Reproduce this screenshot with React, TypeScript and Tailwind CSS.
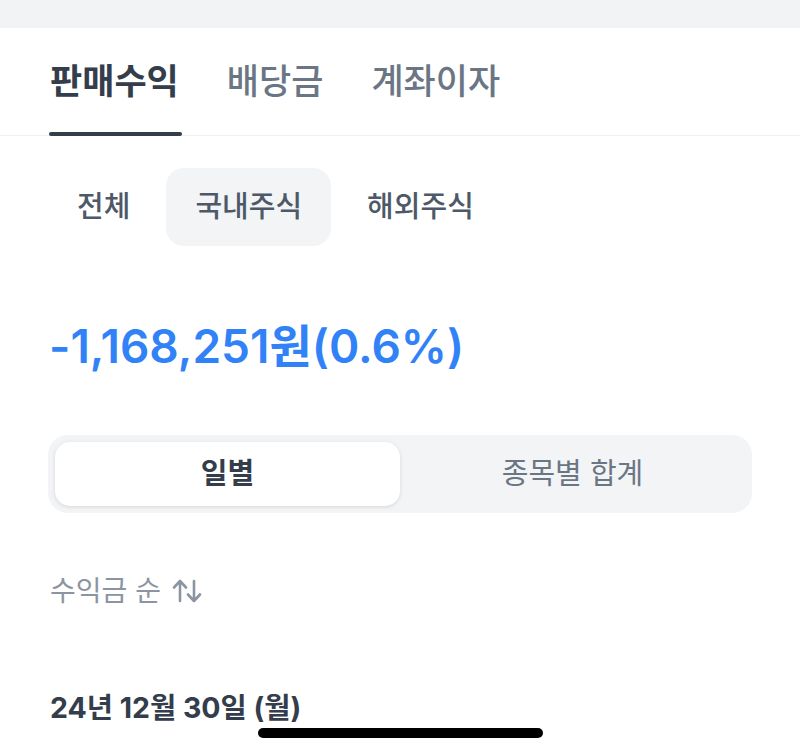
import { useState } from 'react'

const mainTabs = ['판매수익', '배당금', '계좌이자']
const marketTabs = ['전체', '국내주식', '해외주식']

function SortIcon() {
  return (
    <svg width="32" height="26" viewBox="0 0 32 26" fill="none" stroke="#8b95a1" strokeWidth="2.6" strokeLinecap="round" strokeLinejoin="round">
      <path d="M9 23V3M3 9.5l6-6.5 6 6.5" />
      <path d="M23 3v20M17 16.5l6 6.5 6-6.5" />
    </svg>
  )
}

export default function App() {
  const [tab, setTab] = useState(0)
  const [market, setMarket] = useState(1)
  const [mode, setMode] = useState(0)

  return (
    <div
      className="relative min-h-screen w-[800px] h-[754px] overflow-hidden bg-white"
      style={{ fontFamily: 'Inter, "Noto Sans CJK KR", sans-serif' }}
    >
      <div className="h-[28px] bg-[#f2f3f5]" />

      <div className="flex gap-[48px] px-[50px] border-b border-[#eef0f2]">
        {mainTabs.map((t, i) => (
          <button
            key={t}
            onClick={() => setTab(i)}
            className={`relative flex h-[107px] items-center text-[35px] ${
              tab === i ? 'font-bold text-[#333d4b]' : 'font-medium text-[#6b7684]'
            }`}
          >
            {t}
            {tab === i && (
              <span className="absolute bottom-[-1px] left-[-1px] right-[-3px] h-[4px] rounded-full bg-[#333d4b]" />
            )}
          </button>
        ))}
      </div>

      <div className="mt-[32px] flex gap-[7px] px-[48px]">
        {marketTabs.map((t, i) => (
          <button
            key={t}
            onClick={() => setMarket(i)}
            className={`h-[78px] rounded-[18px] px-[29px] text-[29px] font-medium text-[#4e5968] ${
              market === i ? 'bg-[#f2f4f6]' : ''
            }`}
          >
            {t}
          </button>
        ))}
      </div>

      <div className="mt-[72px] px-[49px] text-[46px] font-semibold leading-[56px] text-[#3182f6]">
        -1,168,251원(0.6%)
      </div>

      <div className="mx-[48px] mt-[61px] grid h-[78px] grid-cols-2 rounded-[20px] bg-[#f2f4f6] p-[7px]">
        {['일별', '종목별 합계'].map((t, i) => (
          <button
            key={t}
            onClick={() => setMode(i)}
            className={`rounded-[15px] text-[29px] ${
              mode === i
                ? 'bg-white font-bold text-[#333d4b] shadow-[0_1px_4px_rgba(0,0,0,0.12)]'
                : 'font-normal text-[#6b7684]'
            }`}
          >
            {t}
          </button>
        ))}
      </div>

      <div className="mt-[60px] flex items-center gap-[10px] px-[50px] text-[28px] leading-[36px] text-[#8b95a1]">
        <span>수익금 순</span>
        <SortIcon />
      </div>

      <div className="mt-[79px] px-[50px] text-[28.5px] font-bold leading-[40px] text-[#333d4b]">
        24년 12월 30일 (월)
      </div>

      <div className="absolute bottom-[16px] left-[258px] h-[10px] w-[285px] rounded-full bg-black" />
    </div>
  )
}
